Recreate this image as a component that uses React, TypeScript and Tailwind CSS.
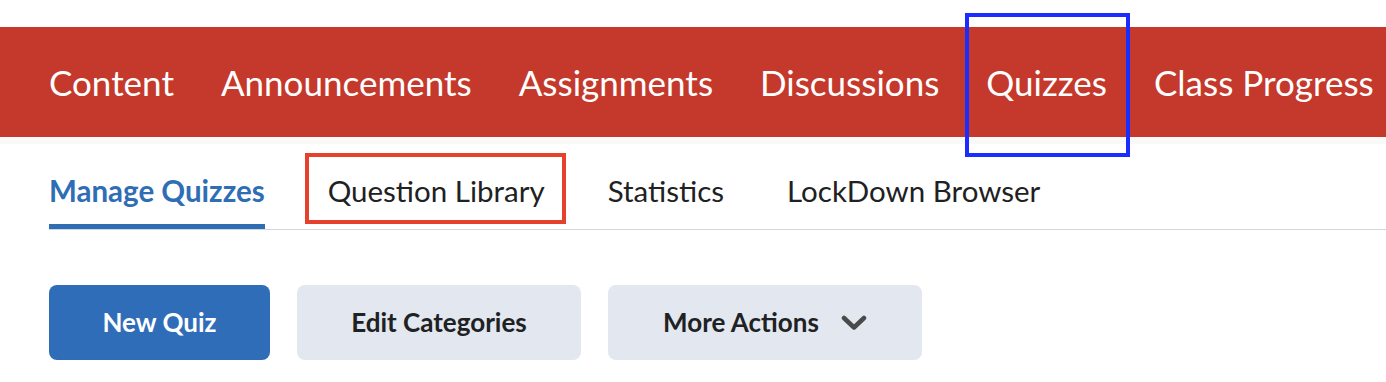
export default function App() {
  const nav = ["Content", "Announcements", "Assignments", "Discussions", "Quizzes", "Class Progress"];
  const tabs = ["Manage Quizzes", "Question Library", "Statistics", "LockDown Browser"];

  return (
    <div className="w-[1386px] h-[382px] bg-white overflow-hidden" style={{ fontFamily: "Lato, 'Noto Sans', sans-serif" }}>
      {/* Course nav bar */}
      <div className="mt-[27px] h-[110px] bg-[#c4392b] flex items-center pl-[49px] pt-[1px] gap-[47px]">
        {nav.map((n) => (
          <div key={n} className="relative text-white text-[35px] leading-none whitespace-nowrap">
            {n}
            {n === "Quizzes" && (
              <div className="absolute left-[-21px] right-[-23px] top-[-52px] h-[144px] border-[4px] border-[#1a2cff]"></div>
            )}
          </div>
        ))}
      </div>
      <div className="h-[7px] bg-[#f9f9f9]"></div>

      {/* Sub tabs */}
      <div className="ml-[49px] h-[86px] border-b border-[#d3d6db] flex items-end gap-[63px]">
        {tabs.map((t, i) => (
          <div
            key={t}
            className={
              "relative h-full flex items-center text-[29.5px] whitespace-nowrap " +
              (i === 0 ? "text-[#2f6db5] font-bold border-b-[5px] border-[#2f6db5] pt-[14px]" : "text-[#202122] pt-[10px]")
            }
          >
            {t}
            {i === 1 && (
              <div className="absolute left-[-23px] right-[-21px] top-[9px] h-[71px] border-[4px] border-[#e5412d]"></div>
            )}
          </div>
        ))}
      </div>

      {/* Action buttons */}
      <div className="ml-[49px] mt-[55px] flex gap-[27px] text-[26px] font-bold">
        <button className="w-[221px] h-[75px] rounded-[8px] bg-[#306db8] text-white">New Quiz</button>
        <button className="w-[284px] h-[75px] rounded-[8px] bg-[#e3e7ef] text-[#202122]">Edit Categories</button>
        <button className="w-[314px] h-[75px] rounded-[8px] bg-[#e3e7ef] text-[#202122] flex items-center justify-center gap-[22px]">
          More Actions
          <svg width="26" height="16" viewBox="0 0 26 16" fill="none">
            <path d="M3 3 L13 12.5 L23 3" stroke="#4a4a4a" strokeWidth="4.5" strokeLinecap="round" strokeLinejoin="round" />
          </svg>
        </button>
      </div>
    </div>
  );
}
